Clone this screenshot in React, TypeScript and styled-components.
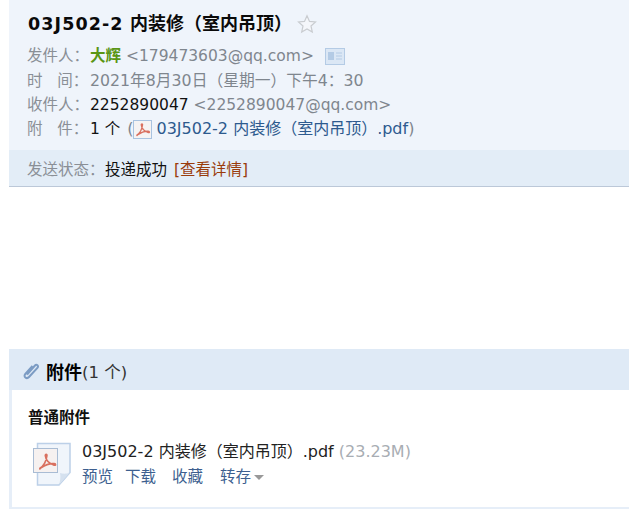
import * as React from 'react'
import styled, { createGlobalStyle } from 'styled-components'

const GlobalStyle = createGlobalStyle`
  html, body {
    margin: 0;
    padding: 0;
    background: #fff;
    overflow: hidden;
  }
  body {
    font-family: "DejaVu Sans", "Noto Sans CJK SC", sans-serif;
    font-size: 15.5px;
    color: #000;
  }
`

const Page = styled.div`
  width: 629px;
  height: 509px;
  padding-left: 9px;
  box-sizing: border-box;
  display: flex;
  flex-direction: column;
`

const Head = styled.header`
  height: 150px;
  padding: 10px 0 0 18px;
  box-sizing: border-box;
  background: #eff4fb;
`

const Title = styled.h1`
  margin: 0 0 6px 1px;
  height: 28px;
  display: flex;
  align-items: center;
  font-size: 18px;
  font-weight: 700;
  line-height: 28px;
  color: #0a0a0a;
  white-space: pre;
`

const TitleCode = styled.span`
  font-size: 17.5px;
  letter-spacing: 1.1px;
`

const Star = styled.svg`
  margin-left: 5px;
  width: 20px;
  height: 20px;
`

const Row = styled.div`
  height: 24.4px;
  display: flex;
  align-items: center;
  white-space: pre;
  line-height: 24px;
  color: #8a8f96;
`

const Label = styled.span`
  width: 63px;
  color: #8a8f96;
  flex: none;
  white-space: pre;
`

const Dark = styled.span`
  color: #111;
`

const Sender = styled.span`
  color: #5a9614;
  font-weight: 700;
`

const Muted = styled.span`
  color: #7f868e;
`

const DateText = styled(Muted)`
  font-size: 15.75px;
`

const Paren = styled(Muted)<{ $gap?: number }>`
  margin-left: ${props => props.$gap || 0}px;
  font-size: 16px;
`

const FileLink = styled.span`
  color: #2d5a8e;
  font-size: 16px;
`

const CardIcon = styled.svg`
  margin-left: 11px;
  width: 20px;
  height: 17px;
`

const SmallPdf = styled.svg`
  width: 19px;
  height: 19px;
  margin: 0 4px 0 0;
`

const StatusBar = styled.div`
  height: 37px;
  padding-left: 18px;
  box-sizing: border-box;
  display: flex;
  align-items: center;
  background: #e3edf7;
  border-bottom: 1px solid #bcc8d8;
  white-space: pre;
  color: #8a8f96;
`

const StatusLabel = styled.span`
  width: 78px;
  flex: none;
`

const DetailLink = styled.span`
  margin-left: 7px;
  color: #9a3c0c;
`

const Spacer = styled.div`
  height: 162px;
`

const AttachHead = styled.div`
  height: 41px;
  padding: 3px 0 0 13px;
  box-sizing: border-box;
  display: flex;
  align-items: center;
  background: #dfeaf6;
  color: #333;
  white-space: pre;
  font-size: 16.5px;
`

const Clip = styled.svg`
  width: 18px;
  height: 18px;
  margin-right: 6px;
`

const AttachTitle = styled.b`
  font-size: 18px;
  color: #000;
`

const AttachBody = styled.section`
  flex: 1;
  border-left: 3px solid #e6eef8;
  border-bottom: 2px solid #e6eef8;
  padding: 16px 0 0 16px;
`

const GroupTitle = styled.div`
  font-size: 15.5px;
  font-weight: 700;
  line-height: 24px;
  color: #111;
  margin-bottom: 10px;
`

const FileRow = styled.div`
  display: flex;
  align-items: flex-start;
`

const BigPdf = styled.svg`
  width: 44px;
  height: 46px;
  margin: 1px 10px 0 0;
  flex: none;
`

const FileName = styled.div`
  line-height: 24px;
  color: #222;
  white-space: pre;
  font-size: 16px;
`

const FileSize = styled.span`
  color: #a8adb3;
`

const Actions = styled.div`
  display: flex;
  align-items: center;
  line-height: 26px;
  color: #3d5f8f;
`

const Action = styled.span<{ $gap?: number }>`
  margin-left: ${props => props.$gap || 0}px;
`

const Caret = styled.i`
  display: inline-block;
  margin-left: 3px;
  vertical-align: 2px;
  border: 5px solid transparent;
  border-top: 5px solid #999;
  border-bottom: 0;
`

function PdfMark () {
  return (
    <path
      d="M4 15c3-2 5-6 5.500-10 .2-1.500-1.300-1.500-1.200 0 .3 3 2.500 6 7 7.500 1.500.4 1.500-1 0-1.200-3.500-.4-7 1-10.500 3.400-1 .7-1 1.300-.8.300z"
      fill="none"
      stroke="#d9705f"
      strokeWidth="1.400"
    />
  )
}

export default function App () {
  return (
    <Page>
      <GlobalStyle />
      <Head>
        <Title>
          <TitleCode>03J502-2</TitleCode> 内装修（室内吊顶）
          <Star viewBox="0 0 20 20">
            <path
              d="M10 1.800l2.500 5.600 6 .6-4.500 4 1.300 6L10 15l-5.300 3 1.300-6-4.500-4 6-.6z"
              fill="#f4f6fa"
              stroke="#c9ccd0"
              strokeWidth="1.200"
            />
          </Star>
        </Title>
        <Row>
          <Label>发件人：</Label>
          <Sender>大辉</Sender>
          <Muted> &lt;179473603@qq.com&gt;</Muted>
          <CardIcon viewBox="0 0 20 17">
            <rect x="0.500" y="0.500" width="19" height="16" fill="#dbe7f5" stroke="#b4cbe5" />
            <rect x="3" y="4" width="6" height="8" fill="#b4cbe5" />
            <path d="M11 5h6M11 8h6M11 11h6" stroke="#b4cbe5" />
          </CardIcon>
        </Row>
        <Row>
          <Label>时   间：</Label>
          <DateText>2021年8月30日（星期一）下午4：30</DateText>
        </Row>
        <Row>
          <Label>收件人：</Label>
          <Dark>2252890047</Dark>
          <Muted> &lt;2252890047@qq.com&gt;</Muted>
        </Row>
        <Row>
          <Label>附   件：</Label>
          <Dark>1 个 </Dark>
          <Paren $gap={2}>(</Paren>
          <SmallPdf viewBox="0 0 19 19">
            <rect x="0.500" y="0.500" width="18" height="18" fill="#f5f3f3" stroke="#a9c3e0" />
            <PdfMark />
          </SmallPdf>
          <FileLink>03J502-2 内装修（室内吊顶）.pdf</FileLink>
          <Paren>)</Paren>
        </Row>
      </Head>
      <StatusBar>
        <StatusLabel>发送状态：</StatusLabel>
        <Dark>投递成功</Dark>
        <DetailLink>[查看详情]</DetailLink>
      </StatusBar>
      <Spacer />
      <AttachHead>
        <Clip viewBox="0 0 18 18">
          <path
            d="M5 12.500L13 3.500c1.600-1.800 4 .5 2.400 2.300L7 15c-2.400 2.600-6-.3-3.700-3L10.500 4"
            fill="none"
            stroke="#7c9cc4"
            strokeWidth="2"
          />
        </Clip>
        <AttachTitle>附件</AttachTitle>(1 个)
      </AttachHead>
      <AttachBody>
        <GroupTitle>普通附件</GroupTitle>
        <FileRow>
          <BigPdf viewBox="0 0 44 46">
            <path d="M9.500 2.500h32.500v29l-11 12.500H9.500z" fill="#f0f5fb" stroke="#bcd0e8" strokeWidth="1.500" />
            <path d="M42 31.500c-3 1.500-7 1.500-10 .5 1 4 0 8.500-1 12z" fill="#d5e1ef" />
            <rect x="5.500" y="7.500" width="24" height="24" fill="#f6f1f0" stroke="#a9bcd4" />
            <g transform="translate(7 8.500) scale(1.250)">
              <PdfMark />
            </g>
          </BigPdf>
          <div>
            <FileName>
              03J502-2 内装修（室内吊顶）.pdf <FileSize>(23.23M)</FileSize>
            </FileName>
            <Actions>
              <Action>预览</Action>
              <Action $gap={12}>下载</Action>
              <Action $gap={16}>收藏</Action>
              <Action $gap={17}>
                转存
                <Caret />
              </Action>
            </Actions>
          </div>
        </FileRow>
      </AttachBody>
    </Page>
  )
}
